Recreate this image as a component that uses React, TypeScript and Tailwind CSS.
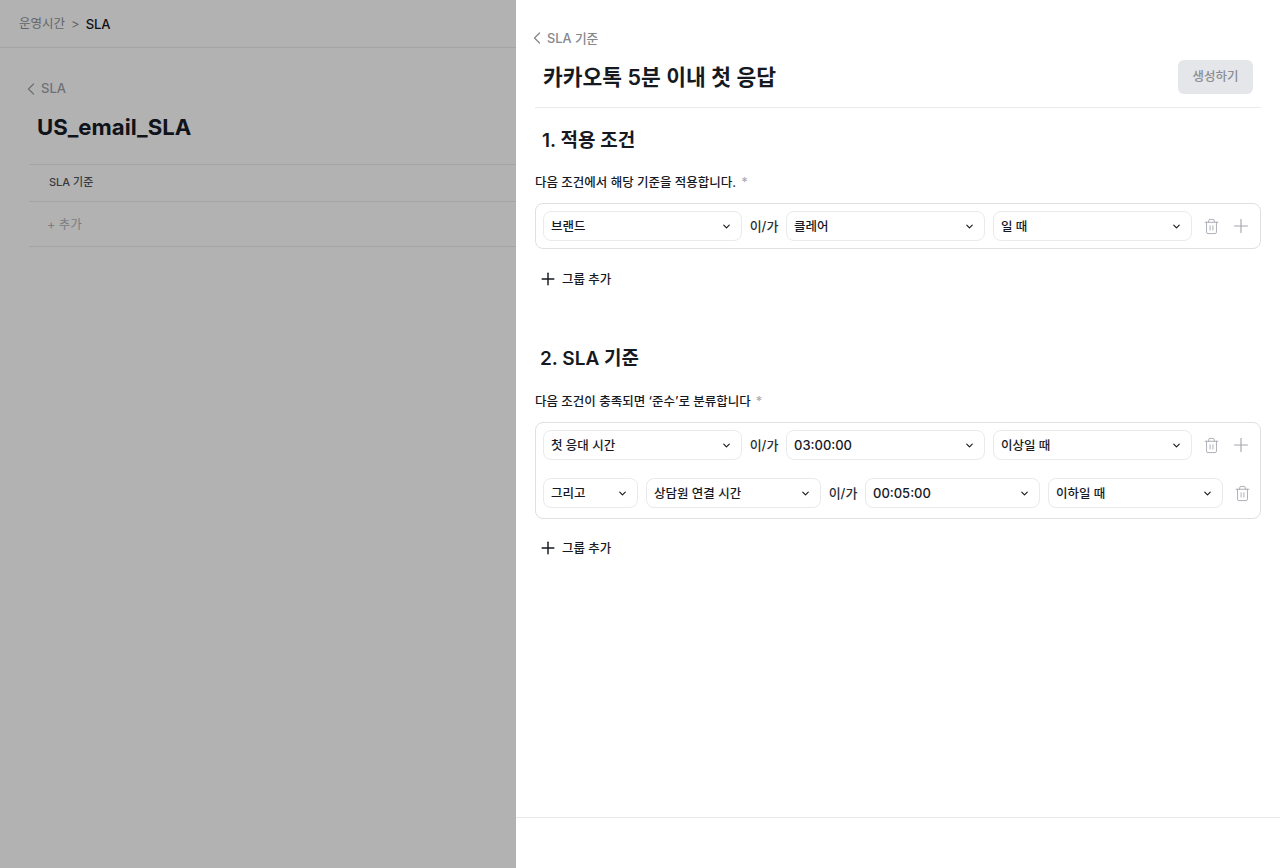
import { ChevronDown, ChevronLeft, Plus, Trash2 } from "lucide-react";

const font = "font-['Inter','Noto_Sans_CJK_KR',sans-serif]";

function Select({ label, width, time }: { label: string; width: string; time?: boolean }) {
  return (
    <div className={`${width} h-[30px] shrink-0 flex items-center justify-between pl-[7px] pr-[9px] bg-white border border-[#e9eaee] rounded-lg font-medium text-[#16191f]`}>
      <span className={time ? "text-[13px] pt-px" : "text-[12.5px] pt-[2px]"}>{label}</span>
      <ChevronDown size={11} strokeWidth={2.5} className="text-[#16191f]" />
    </div>
  );
}

function Josa() {
  return <span className="w-7 shrink-0 pt-[2px] flex justify-center text-[13px] font-medium text-[#2b2f36] whitespace-nowrap">이/가</span>;
}

function TrashButton() {
  return (
    <span className="w-[14px] shrink-0 flex justify-center text-[#a3a6ad]">
      <Trash2 size={17} strokeWidth={1.25} className="shrink-0" />
    </span>
  );
}

function PlusButton() {
  return (
    <span className="w-[14px] shrink-0 flex justify-center text-[#a3a6ad]">
      <Plus size={22} strokeWidth={1.25} className="shrink-0" />
    </span>
  );
}

function AddGroup() {
  return (
    <div className="flex items-center gap-1 pl-[3px] h-5 text-[12.5px] font-medium text-[#16191f]">
      <Plus size={20} strokeWidth={1.75} />
      <span className="pt-[2px]">그룹 추가</span>
    </div>
  );
}

function Label({ text }: { text: string }) {
  return (
    <div className="h-5 flex items-center text-[12.5px] font-medium text-[#16191f]">
      {text}
      <span className="ml-[5px] text-[#a8abb2]">*</span>
    </div>
  );
}

export default function App() {
  return (
    <div className={`${font} flex w-[1280px] h-[868px] overflow-hidden`}>
      {/* dimmed page behind the drawer */}
      <div className="w-[516px] shrink-0 bg-[#b2b2b2]">
        <header className="h-12 flex items-center pl-[19px] pt-[2px] border-b border-[#a3a4a6]">
          <span className="text-[12.5px] text-[#63656a]">운영시간</span>
          <span className="mx-[6px] text-[13px] text-[#63656a]">&gt;</span>
          <span className="text-[13px] font-medium text-[#0e1014]">SLA</span>
        </header>
        <div className="pl-[29px] pt-[31px]">
          <div className="h-5 flex items-center text-[13px] font-medium text-[#6f7176]">
            <ChevronLeft size={20} strokeWidth={1.5} className="-ml-[8px]" />
            <span>SLA</span>
          </div>
          <h1 className="mt-[14px] pl-2 h-7 flex items-center text-[22.2px] leading-7 font-bold text-[#10131a]">US_email_SLA</h1>
          <div className="mt-[23px] h-[38px] flex items-center pl-5 pb-px border-y border-[#a3a4a6] text-[11px] font-medium text-[#383a3f]">SLA 기준</div>
          <div className="h-[45px] flex items-center pl-[18px] pt-[2px] border-b border-[#a3a4a6] text-[12.5px] text-[#7b7d81]">+ 추가</div>
        </div>
      </div>

      {/* drawer */}
      <div className="flex-1 flex flex-col bg-white">
        <div className="flex-1 pl-[19px] pr-[19px] pt-[28px]">
          <div className="h-5 flex items-center text-[12.75px] font-medium text-[#85878c]">
            <ChevronLeft size={20} strokeWidth={1.5} className="-ml-[8px]" />
            <span className="pt-px">SLA 기준</span>
          </div>
          <div className="flex items-start justify-between h-[60px] border-b border-[#e9eaee] pr-[8px]">
            <h1 className="pl-2 mt-[13px] text-[21.5px] leading-8 font-semibold text-[#16191f]">카카오톡 5분 이내 첫 응답</h1>
            <div className="w-[75px] h-[34px] mt-[12px] pt-px flex items-center justify-center bg-[#e5e6ea] rounded-md text-[12.5px] font-medium text-[#8a8d93]">생성하기</div>
          </div>

          <h2 className="mt-[19px] pl-[7px] h-7 flex items-center text-[19px] font-semibold text-[#16191f]">1. 적용 조건</h2>
          <div className="mt-[18px]"><Label text="다음 조건에서 해당 기준을 적용합니다." /></div>
          <div className="mt-[10px] w-[726px] h-[46px] flex items-center px-[7px] gap-2 border border-[#dfe0e4] rounded-lg">
            <Select label="브랜드" width="w-[199px]" />
            <Josa />
            <Select label="클레어" width="w-[199px]" />
            <Select label="일 때" width="w-[199px]" />
            <div className="flex items-center ml-[4px] gap-4">
              <TrashButton />
              <PlusButton />
            </div>
          </div>
          <div className="mt-5"><AddGroup /></div>

          <h2 className="mt-[56px] pl-[5px] h-7 flex items-center text-[19px] font-semibold text-[#16191f]">2. SLA 기준</h2>
          <div className="mt-[19px]"><Label text="다음 조건이 충족되면 ‘준수’로 분류합니다" /></div>
          <div className="mt-[10px] w-[726px] h-[97px] flex flex-col gap-[18px] pt-[7px] px-[7px] border border-[#dfe0e4] rounded-lg">
            <div className="flex items-center gap-2">
              <Select label="첫 응대 시간" width="w-[199px]" />
              <Josa />
              <Select label="03:00:00" width="w-[199px]" time />
              <Select label="이상일 때" width="w-[199px]" />
              <div className="flex items-center ml-[4px] gap-4">
                <TrashButton />
                <PlusButton />
              </div>
            </div>
            <div className="flex items-center gap-2">
              <Select label="그리고" width="w-[95px]" />
              <Select label="상담원 연결 시간" width="w-[175px]" />
              <Josa />
              <Select label="00:05:00" width="w-[175px]" time />
              <Select label="이하일 때" width="w-[175px]" />
              <div className="ml-[4px]"><TrashButton /></div>
            </div>
          </div>
          <div className="mt-[19px]"><AddGroup /></div>
        </div>
        <div className="h-[51px] shrink-0 border-t border-[#e9eaee]" />
      </div>
    </div>
  );
}
